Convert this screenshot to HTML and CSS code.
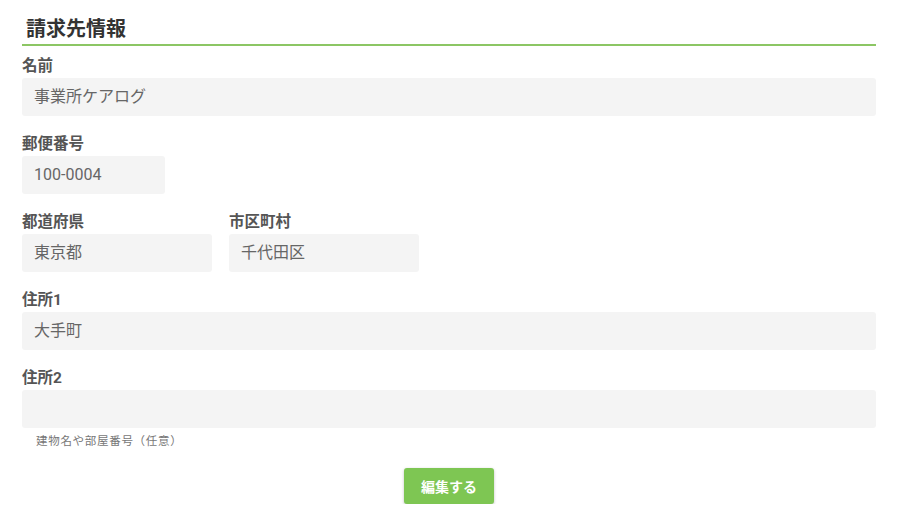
FILE: index.html
```html
<!DOCTYPE html>
<html lang="ja">
<head>
<meta charset="utf-8">
<link rel="stylesheet" href="styles.css">
</head>
<body>
<div class="page">
  <h2 class="title">請求先情報</h2>
  <div class="field">
    <div class="label">名前</div>
    <div class="input full">事業所ケアログ</div>
  </div>
  <div class="field">
    <div class="label">郵便番号</div>
    <div class="input zip">100-0004</div>
  </div>
  <div class="row">
    <div class="field">
      <div class="label">都道府県</div>
      <div class="input half">東京都</div>
    </div>
    <div class="field">
      <div class="label">市区町村</div>
      <div class="input half">千代田区</div>
    </div>
  </div>
  <div class="field">
    <div class="label">住所1</div>
    <div class="input full">大手町</div>
  </div>
  <div class="field last">
    <div class="label">住所2</div>
    <div class="input full"></div>
    <div class="help">建物名や部屋番号（任意）</div>
  </div>
  <div class="actions">
    <button class="btn">編集する</button>
  </div>
</div>
</body>
</html>
```

FILE: styles.css
```css
html, body {
  margin: 0;
  padding: 0;
  background: #ffffff;
}
body {
  font-family: Roboto, "Noto Sans CJK JP", "Noto Sans", sans-serif;
  color: #555555;
}
.page {
  width: 854px;
  padding: 17px 0 0 22px;
}
.title {
  margin: 0 0 11px 0;
  padding: 0 0 3px 4px;
  font-size: 20px;
  line-height: 24px;
  font-weight: 700;
  color: #333333;
  border-bottom: 2px solid #8cc664;
}
.field {
  margin-bottom: 19px;
}
.field.last {
  margin-bottom: 0;
}
.label {
  font-size: 15.5px;
  line-height: 18px;
  font-weight: 700;
  color: #555555;
  margin-bottom: 3px;
}
.input {
  box-sizing: border-box;
  height: 38px;
  padding: 0 12px;
  background: #f4f4f4;
  border-radius: 3px;
  font-size: 16px;
  line-height: 38px;
  color: #666666;
}
.full { width: 854px; }
.zip { width: 143px; }
.half { width: 190px; }
.row {
  display: flex;
  gap: 17px;
}
.help {
  margin-top: 5px;
  padding-left: 14px;
  font-size: 11.5px;
  line-height: 16px;
  color: #777777;
  letter-spacing: 0.7px;
}
.actions {
  display: flex;
  justify-content: center;
  margin-top: 19px;
}
.btn {
  width: 90px;
  height: 36px;
  border: none;
  border-radius: 3px;
  background: #7ec653;
  color: #ffffff;
  font-family: Roboto, "Noto Sans CJK JP", sans-serif;
  font-size: 14px;
  font-weight: 700;
  box-shadow: 0 1px 3px rgba(0,0,0,0.25);
  padding: 0;
}
```
